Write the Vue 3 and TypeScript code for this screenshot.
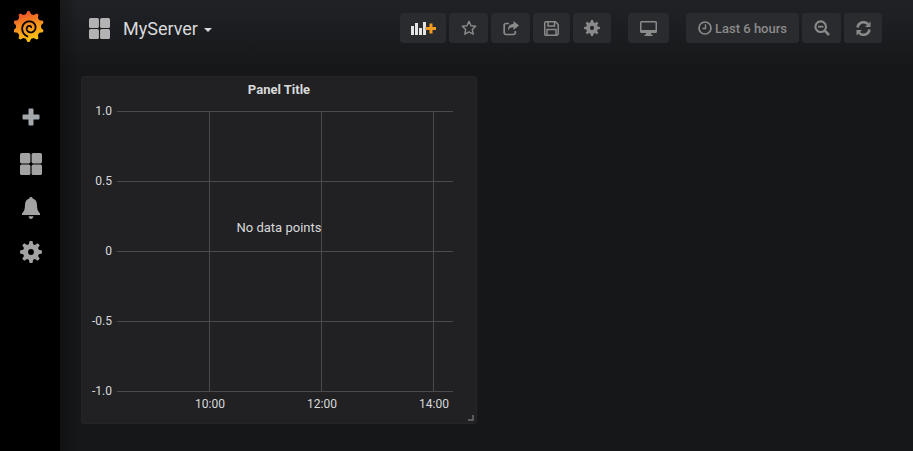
<script setup lang="ts">
const menu = ['plus', 'dash', 'bell', 'gear']

// toothed outline, used for the settings icons and the logo
function cog(cx: number, cy: number, outer: number, inner: number, teeth: number, hole: number, tip = 0.17) {
  const step = (Math.PI * 2) / teeth
  let d = ''
  for (let i = 0; i < teeth; i++) {
    const a = i * step - Math.PI / 2
    const pts: [number, number][] = [
      [inner, a - step * 0.34],
      [outer, a - step * tip],
      [outer, a + step * tip],
      [inner, a + step * 0.34],
    ]
    for (const [r, t] of pts) {
      d += `${d ? 'L' : 'M'}${(cx + r * Math.cos(t)).toFixed(2)} ${(cy + r * Math.sin(t)).toFixed(2)}`
    }
  }
  d += 'Z'
  if (hole > 0) {
    d += `M${cx - hole} ${cy}a${hole} ${hole} 0 1 0 ${hole * 2} 0a${hole} ${hole} 0 1 0 ${-hole * 2} 0Z`
  }
  return d
}

function spiral(cx: number, cy: number) {
  let d = ''
  for (let i = 0; i <= 60; i++) {
    const t = i / 60
    const angle = 0.1 + t * Math.PI * 3.4
    const r = 1 + t * 7.8
    d += `${d ? 'L' : 'M'}${(cx + r * Math.cos(angle)).toFixed(2)} ${(cy - r * Math.sin(angle)).toFixed(2)}`
  }
  return d
}

const gearPath = cog(12, 12, 12, 8.8, 8, 3.2)
const logoPath = cog(14.5, 15.5, 15.5, 12.6, 10, 0, 0.1)
const logoSpiral = spiral(16, 17)

const yTicks = [
  { label: '1.0', y: 35 },
  { label: '0.5', y: 105 },
  { label: '0', y: 175 },
  { label: '-0.5', y: 245 },
  { label: '-1.0', y: 315 },
]
const xTicks = [
  { label: '10:00', x: 128 },
  { label: '12:00', x: 240 },
  { label: '14:00', x: 352 },
]
</script>

<template>
  <div class="page">
    <aside class="sidemenu">
      <svg class="logo" width="30" height="32" viewBox="0 0 30 32">
        <defs>
          <linearGradient id="sun" x1="0.2" y1="0" x2="0.5" y2="1">
            <stop offset="0.05" stop-color="#ee4f2a" />
            <stop offset="0.55" stop-color="#f7941d" />
            <stop offset="1" stop-color="#fcc60f" />
          </linearGradient>
        </defs>
        <path :d="logoPath" fill="url(#sun)" />
        <path :d="logoSpiral" fill="none" stroke="#000" stroke-width="1.800" />
      </svg>
      <ul class="menu-list">
        <li v-for="item in menu" :key="item">
          <svg v-if="item === 'plus'" width="18" height="18" viewBox="0 0 18 18">
            <path d="M6.500 1.500a1 1 0 0 1 1-1h3a1 1 0 0 1 1 1v5h5a1 1 0 0 1 1 1v3a1 1 0 0 1-1 1h-5v5a1 1 0 0 1-1 1h-3a1 1 0 0 1-1-1v-5h-5a1 1 0 0 1-1-1v-3a1 1 0 0 1 1-1h5z" fill="#a3a8ad" />
          </svg>
          <svg v-else-if="item === 'dash'" width="22" height="22" viewBox="0 0 22 22">
            <rect x="0" y="0" width="10.400" height="10.400" rx="1.600" />
            <rect x="11.600" y="0" width="10.400" height="10.400" rx="1.600" />
            <rect x="0" y="11.600" width="10.400" height="10.400" rx="1.600" />
            <rect x="11.600" y="11.600" width="10.400" height="10.400" rx="1.600" />
          </svg>
          <svg v-else-if="item === 'bell'" width="18" height="22" viewBox="0 0 18 22">
            <path d="M9 0c1 0 1.600.6 1.800 1.500C13.600 2.300 15 4.800 15 8c0 4 .8 6.500 3 8.400V18H0v-1.600C2.200 14.500 3 12 3 8c0-3.200 1.400-5.700 4.200-6.500C7.400.6 8 0 9 0zM6.500 19.200h5C11.200 20.800 10.200 22 9 22s-2.200-1.200-2.500-2.800z" />
          </svg>
          <svg v-else width="22" height="22" viewBox="0 0 24 24">
            <path :d="gearPath" fill-rule="evenodd" />
          </svg>
        </li>
      </ul>
    </aside>

    <main class="main">
      <header class="navbar">
        <svg class="nav-dash" width="21" height="21" viewBox="0 0 22 22">
          <rect x="0" y="0" width="10.400" height="10.400" rx="1.600" />
          <rect x="11.600" y="0" width="10.400" height="10.400" rx="1.600" />
          <rect x="0" y="11.600" width="10.400" height="10.400" rx="1.600" />
          <rect x="11.600" y="11.600" width="10.400" height="10.400" rx="1.600" />
        </svg>
        <span class="nav-title">MyServer</span>
        <span class="caret"></span>

        <div class="toolbar">
          <button class="btn w-add">
            <svg width="25" height="13" viewBox="0 0 25 13">
              <rect x="0" y="4" width="3" height="9" fill="#e4e4e4" />
              <rect x="4" y="1" width="3" height="12" fill="#e4e4e4" />
              <rect x="8" y="6" width="3" height="7" fill="#e4e4e4" />
              <rect x="12" y="0" width="3" height="13" fill="#e4e4e4" />
              <path d="M18.500 1.500h3v3.500h3.500v3h-3.500v3.500h-3V8h-3.500V5h3.500z" fill="#f39c1f" stroke="#2a2b2e" stroke-width="0.600" paint-order="stroke" />
            </svg>
          </button>
          <button class="btn w-star">
            <svg width="16" height="16" viewBox="0 0 16 16">
              <path d="M8 1.400l2 4.300 4.700.6-3.400 3.200.9 4.700L8 11.900l-4.200 2.300.9-4.700L1.300 6.300 6 5.700z" fill="none" stroke="#8a8a8a" stroke-width="1.400" stroke-linejoin="round" />
            </svg>
          </button>
          <button class="btn w-share">
            <svg width="16" height="15" viewBox="0 0 16 15">
              <path d="M6 2.500H3a1.800 1.800 0 0 0-1.800 1.800v7.400A1.800 1.800 0 0 0 3 13.500h7.500a1.800 1.800 0 0 0 1.800-1.800V10" fill="none" stroke="#8a8a8a" stroke-width="1.700" />
              <path d="M10.500 0L16 4.500 10.500 9V6.300C7.600 6.300 5.800 7.200 5 10c-.4-4.500 1.800-7 5.500-7.200z" fill="#8a8a8a" />
            </svg>
          </button>
          <button class="btn w-save">
            <svg width="15" height="15" viewBox="0 0 15 15">
              <path d="M1.500.8h10l2.700 2.700v9.200a1.500 1.500 0 0 1-1.500 1.500h-11A1.500 1.500 0 0 1 .7 12.700V2.300A1.500 1.500 0 0 1 1.500.8z" fill="none" stroke="#8a8a8a" stroke-width="1.500" />
              <path d="M4 1v4h6.500V1M3 14V8.500h9V14" fill="none" stroke="#8a8a8a" stroke-width="1.500" />
            </svg>
          </button>
          <button class="btn w-gear">
            <svg width="16" height="16" viewBox="0 0 24 24">
              <path :d="gearPath" fill="#8a8a8a" fill-rule="evenodd" />
            </svg>
          </button>
          <button class="btn w-tv">
            <svg width="17" height="15" viewBox="0 0 17 15">
              <path d="M1.500 0h14A1.500 1.500 0 0 1 17 1.500v9a1.500 1.500 0 0 1-1.500 1.500H11v1.500h1.500V15h-8v-1.500H6V12H1.500A1.500 1.500 0 0 1 0 10.500v-9A1.500 1.500 0 0 1 1.500 0zM1.500 1.500v7.500h14V1.500z" fill="#8a8a8a" fill-rule="evenodd" />
            </svg>
          </button>
          <button class="btn w-time">
            <svg width="14" height="14" viewBox="0 0 14 14">
              <circle cx="7" cy="7" r="6" fill="none" stroke="#8a8a8a" stroke-width="1.700" />
              <path d="M7.500 3.200v4.300H4.500" fill="none" stroke="#8a8a8a" stroke-width="1.400" />
            </svg>
            <span>Last 6 hours</span>
          </button>
          <button class="btn w-zoom">
            <svg width="16" height="16" viewBox="0 0 16 16">
              <circle cx="6.700" cy="6.700" r="5.300" fill="none" stroke="#8a8a8a" stroke-width="2.100" />
              <path d="M4 6.700h5.400" stroke="#8a8a8a" stroke-width="1.800" />
              <path d="M10.700 10.700L15 15" stroke="#8a8a8a" stroke-width="2.500" />
            </svg>
          </button>
          <button class="btn w-refresh">
            <svg width="15" height="15" viewBox="0 0 15 15">
              <path d="M1.500 6.500A6 6 0 0 1 12 3.300" fill="none" stroke="#8a8a8a" stroke-width="2.500" />
              <path d="M14.500 0.500v5.500H9z" fill="#8a8a8a" />
              <path d="M13.500 8.500A6 6 0 0 1 3 11.700" fill="none" stroke="#8a8a8a" stroke-width="2.500" />
              <path d="M0.500 14.500V9H6z" fill="#8a8a8a" />
            </svg>
          </button>
        </div>
      </header>

      <section class="panel">
        <h3 class="panel-title">Panel Title</h3>
        <svg class="chart" width="394" height="346" viewBox="0 0 394 346">
          <g stroke="#4a4a4c" stroke-width="1">
            <line v-for="t in yTicks" :key="t.label" x1="35" x2="371" :y1="t.y - 0.5" :y2="t.y - 0.5" />
            <line v-for="t in xTicks" :key="t.label" :x1="t.x - 0.5" :x2="t.x - 0.5" y1="35" y2="315" />
          </g>
          <text v-for="t in yTicks" :key="t.label" class="tick" x="30" :y="t.y + 2.500" text-anchor="end">{{ t.label }}</text>
          <text v-for="t in xTicks" :key="t.label" class="tick" :x="t.x" y="331" text-anchor="middle">{{ t.label }}</text>
          <text class="empty" x="197" y="155" text-anchor="middle">No data points</text>
        </svg>
        <svg class="resize" width="6" height="6" viewBox="0 0 6 6">
          <path d="M4 0h2v6H0V4h4z" fill="#5a5a5c" />
        </svg>
      </section>
    </main>
  </div>
</template>

<style>
html,
body {
  margin: 0;
  background: #161719;
}
</style>

<style scoped>
.page {
  display: flex;
  height: 451px;
  overflow: hidden;
  font-family: Roboto, "Liberation Sans", sans-serif;
  color: #d8d9da;
}
.sidemenu {
  width: 60px;
  flex: none;
  background: #000;
  display: flex;
  flex-direction: column;
  padding: 11px 0 0 14px;
  box-sizing: border-box;
}
.logo {
  display: block;
}
.menu-list {
  list-style: none;
  margin: 52px 0 0 -14px;
  padding: 0 0 0 2px;
  display: flex;
  flex-direction: column;
}
.menu-list li {
  height: 44px;
  width: 58px;
  display: flex;
  align-items: center;
  justify-content: center;
  color: #a3a3a3;
}
.menu-list li:first-child {
  margin-bottom: 3px;
}
.menu-list svg {
  fill: #a3a3a3;
}
.main {
  flex: 1;
  min-width: 0;
  background:
    linear-gradient(90deg, rgba(0, 0, 0, 0.25), rgba(0, 0, 0, 0) 20px),
    linear-gradient(180deg, #212225 0, #1c1d20 30px, #161719 70px);
  padding-left: 21px;
}
.navbar {
  display: flex;
  align-items: center;
  height: 56px;
  box-sizing: border-box;
  padding: 0 31px 0 8px;
}
.nav-dash {
  fill: #b3b3b3;
  margin-right: 13px;
}
.nav-title {
  font-size: 18px;
  color: #d8d9da;
}
.caret {
  margin-left: 6px;
  margin-top: 3px;
  border-top: 4px solid #d8d9da;
  border-left: 4px solid transparent;
  border-right: 4px solid transparent;
}
.toolbar {
  margin-left: auto;
  display: flex;
  gap: 3px;
}
.btn {
  height: 30px;
  display: flex;
  align-items: center;
  justify-content: center;
  gap: 3px;
  padding: 0;
  border: 1px solid #2a2b2e;
  border-radius: 3px;
  background: #2a2b2e;
  color: #8a8a8a;
  font-family: inherit;
  font-size: 13px;
  font-weight: 500;
  box-sizing: border-box;
}
.w-add { width: 46px; }
.w-star { width: 39px; }
.w-share { width: 39px; }
.w-save { width: 37px; }
.w-gear { width: 38px; }
.w-tv { width: 41px; margin-left: 14px; }
.w-time { width: 113px; margin-left: 14px; }
.w-zoom { width: 39px; }
.w-refresh { width: 38px; }
.panel {
  position: relative;
  width: 396px;
  height: 348px;
  margin-top: 20px;
  box-sizing: border-box;
  background: #212124;
  border: 1px solid #252527;
  border-radius: 3px;
}
.panel-title {
  position: absolute;
  left: 0;
  right: 0;
  top: 5px;
  margin: 0;
  text-align: center;
  font-size: 13px;
  font-weight: 700;
  color: #d8d9da;
}
.chart {
  display: block;
}
.tick {
  font-size: 12px;
  fill: #d8d9da;
}
.empty {
  font-size: 13px;
  fill: #d8d9da;
}
.resize {
  position: absolute;
  right: 2px;
  bottom: 2px;
}
</style>
